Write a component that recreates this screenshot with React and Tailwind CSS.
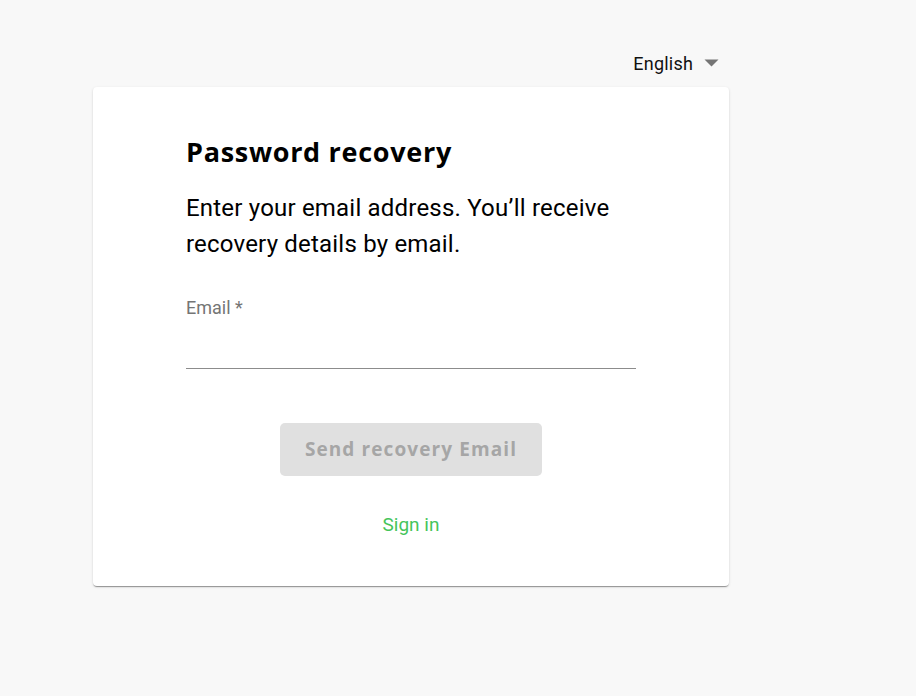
import React from 'react';

const App = () => {
  return (
    <div className="min-h-screen w-full bg-[#f8f8f8] font-['Roboto',sans-serif]">
      <div className="ml-[93px] w-[636px] pt-[49px]">
        {/* Language picker */}
        <div className="flex h-[28px] items-center justify-end pr-[10px]">
          <span className="text-[18px] tracking-[0.2px] text-[#111]">English</span>
          <svg className="ml-[11px]" width="15" height="8" viewBox="0 0 15 8">
            <path d="M0.5 0.5 L14.5 0.5 L7.5 7.5 Z" fill="#757575" />
          </svg>
        </div>

        {/* Card */}
        <div className="mt-[10px] rounded-[4px] bg-white px-[93px] pt-[48px] pb-[49px] shadow-[0_2px_1px_-1px_rgba(0,0,0,0.25),0_1px_1px_0_rgba(0,0,0,0.14),0_1px_3px_0_rgba(0,0,0,0.12)]">
          <h1 className="font-['Open_Sans',sans-serif] text-[27px] font-bold leading-[34px] tracking-[0.7px] text-black">
            Password recovery
          </h1>
          <p className="mt-[21px] text-[24px] leading-[36px] tracking-[0.2px] text-black">
            Enter your email address. You’ll receive recovery details by email.
          </p>

          <div className="mt-[35px]">
            <label className="block text-[18px] leading-[22px] text-[#757575]">Email *</label>
            <input
              type="email"
              className="mt-[12px] block h-[38px] w-full border-b border-[#8c8c8c] bg-transparent text-[18px] outline-none"
            />
          </div>

          <div className="mt-[54px] flex justify-center">
            <button
              disabled
              className="h-[53px] w-[262px] rounded-[5px] bg-[#e0e0e0] font-['Open_Sans',sans-serif] text-[19px] font-bold tracking-[1.1px] text-[#a6a6a6]"
            >
              Send recovery Email
            </button>
          </div>

          <div className="mt-[37px] flex justify-center">
            <a className="text-[19px] leading-[24px] text-[#45c45a]" href="#">
              Sign in
            </a>
          </div>
        </div>
      </div>
    </div>
  );
};

export default App;
